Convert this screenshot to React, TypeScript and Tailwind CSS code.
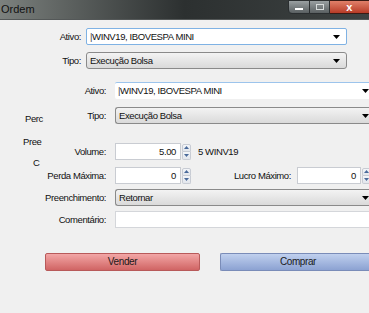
import React from 'react';

const Arrow = () => (
    <svg width="7" height="4" viewBox="0 0 7 4" className="shrink-0">
        <path d="M0 0h7L3.5 4z" fill="#000" />
    </svg>
);

const Spinner = () => (
    <div className="flex flex-col w-[9px] h-[16px] ml-[1px] shrink-0">
        <div className="flex-1 flex items-center justify-center border border-[#c8ccd4] bg-gradient-to-b from-[#f4f6f9] to-[#e2e6ec] rounded-t-[2px]">
            <svg width="5" height="3" viewBox="0 0 5 3"><path d="M0 3h5L2.5 0z" fill="#4a6a9a" /></svg>
        </div>
        <div className="flex-1 flex items-center justify-center border border-t-0 border-[#c8ccd4] bg-gradient-to-b from-[#f4f6f9] to-[#e2e6ec] rounded-b-[2px]">
            <svg width="5" height="3" viewBox="0 0 5 3"><path d="M0 0h5L2.5 3z" fill="#4a6a9a" /></svg>
        </div>
    </div>
);

const EditCombo = ({ text, className = '' }: { text: string; className?: string }) => (
    <div className={`h-[17px] flex items-center justify-between bg-white border border-[#7fb2e4] rounded-[2px] pl-[3px] pr-[6px] ${className}`}>
        <span><span className="font-light text-[#444]">|</span>{text}</span>
        <Arrow />
    </div>
);

const ListCombo = ({ text, className = '' }: { text: string; className?: string }) => (
    <div className={`h-[17px] flex items-center justify-between bg-gradient-to-b from-[#f3f3f3] to-[#dadada] border border-[#8a8a8a] rounded-[3px] pl-[3px] pr-[6px] ${className}`}>
        <span>{text}</span>
        <Arrow />
    </div>
);

const SpinBox = ({ value, width }: { value: string; width: string }) => (
    <div className="flex items-center">
        <div className={`h-[17px] ${width} bg-white border border-[#c9ccd2] flex items-center justify-end pr-[4px]`}>{value}</div>
        <Spinner />
    </div>
);

export default function App() {
    return (
        <div className="w-[369px] h-[313px] overflow-hidden bg-[#f0f0f0] text-[9.5px] tracking-[-0.4px] text-[#111] leading-none" style={{ fontFamily: '"Liberation Sans", Arial, sans-serif' }}>
            {/* title bar */}
            <div className="h-[19px] flex items-start justify-between bg-gradient-to-r from-[#7c817e] via-[#2c3030] to-[#3d4242]">
                <span className="text-[11px] tracking-normal text-[#111] pt-[4px] pl-[1px]">Ordem</span>
                <div className="flex h-[14px] mr-[-8px]">
                    <div className="w-[22px] flex items-center justify-center bg-gradient-to-b from-[#9aa0a2] to-[#5a6062] border border-[#2a2e30] rounded-bl-[4px]">
                        <div className="w-[8px] h-[2px] bg-white mt-[4px]" />
                    </div>
                    <div className="w-[20px] flex items-center justify-center bg-gradient-to-b from-[#9aa0a2] to-[#5a6062] border-y border-r border-[#2a2e30]">
                        <div className="w-[8px] h-[6px] border border-[#d8dcdc]" />
                    </div>
                    <div className="w-[47px] flex items-center justify-center bg-gradient-to-b from-[#e0806a] to-[#b83a26] border-y border-r border-[#3a1a14] rounded-br-[4px] pr-[8px]">
                        <span className="text-white font-bold text-[11px]">x</span>
                    </div>
                </div>
            </div>
            <div className="h-[1px] bg-[#545858]" />

            <div className="flex h-[293px]">
                <div className="w-[2px] flex flex-col">
                    <div className="h-[210px] bg-[#9db59d]" />
                    <div className="h-[57px]" />
                    <div className="flex-1 bg-[#9db59d]" />
                </div>

                <div className="flex-1 flex flex-col">
                    {/* first layer */}
                    <div className="flex flex-col gap-[7px] pt-[8px]">
                        <div className="flex items-center">
                            <span className="w-[86px] text-right pr-[5px]">Ativo:</span>
                            <EditCombo text="WINV19, IBOVESPA MINI" className="w-[261px]" />
                        </div>
                        <div className="flex items-center">
                            <span className="w-[86px] text-right pr-[5px]">Tipo:</span>
                            <ListCombo text="Execução Bolsa" className="w-[261px]" />
                        </div>
                    </div>

                    {/* second layer */}
                    <div className="flex mt-[13px]">
                        <div className="w-[44px] flex flex-col">
                            <span className="pl-[25px] mt-[32px]">Perc</span>
                            <span className="pl-[23px] mt-[13px]">Pree</span>
                            <span className="pl-[33px] mt-[12px]">C</span>
                        </div>
                        <div className="flex-1 flex flex-col">
                            <div className="flex items-center">
                                <span className="w-[71px] text-right pr-[9px]">Ativo:</span>
                                <EditCombo text="WINV19, IBOVESPA MINI" className="w-[260px] border-x-0 border-b-0 border-t-[#9cc4ec]" />
                            </div>
                            <div className="flex items-center mt-[8px]">
                                <span className="w-[71px] text-right pr-[9px]">Tipo:</span>
                                <ListCombo text="Execução Bolsa" className="w-[260px] rounded-r-none border-r-0" />
                            </div>
                            <div className="flex items-center mt-[19px]">
                                <span className="w-[71px] text-right pr-[9px]">Volume:</span>
                                <SpinBox value="5.00" width="w-[66px]" />
                                <span className="ml-[7px]">5 WINV19</span>
                            </div>
                            <div className="flex items-center mt-[7px]">
                                <span className="w-[71px] text-right pr-[9px] whitespace-nowrap">Perda Máxima:</span>
                                <SpinBox value="0" width="w-[66px]" />
                                <span className="w-[106px] text-right pr-[6px] whitespace-nowrap">Lucro Máximo:</span>
                                <SpinBox value="0" width="w-[64px]" />
                            </div>
                            <div className="flex items-center mt-[5px]">
                                <span className="w-[71px] text-right pr-[9px] whitespace-nowrap">Preenchimento:</span>
                                <ListCombo text="Retornar" className="w-[260px] rounded-r-none border-r-0" />
                            </div>
                            <div className="flex items-center mt-[5px]">
                                <span className="w-[71px] text-right pr-[9px]">Comentário:</span>
                                <div className="h-[17px] w-[260px] bg-white border border-r-0 border-[#d4d6da]" />
                            </div>
                        </div>
                    </div>

                    {/* buttons */}
                    <div className="flex mt-[25px] pl-[45px] gap-[20px]">
                        <button className="w-[155px] h-[18px] bg-gradient-to-b from-[#f2a6a6] to-[#d06464] border border-[#b85a5a] rounded-[2px] text-[#1a1a1a] text-[10px]">Vender</button>
                        <button className="flex-1 h-[18px] bg-gradient-to-b from-[#c0d0ee] to-[#8ca2d2] border border-r-0 border-[#7a8cb8] rounded-l-[2px] text-[#1a1a1a] text-[10px]">Comprar</button>
                    </div>
                </div>
            </div>
        </div>
    );
}
